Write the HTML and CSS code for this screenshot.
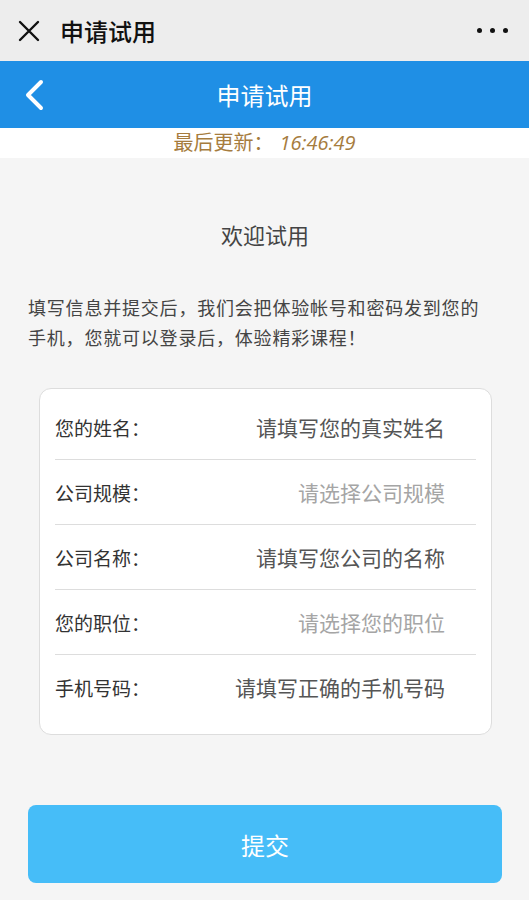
FILE: index.html
```html
<!DOCTYPE html>
<html lang="zh-CN">
<head>
    <meta charset="UTF-8">
    <meta name="viewport" content="width=device-width, initial-scale=1.0">
    <title>申请试用</title>
    <link rel="stylesheet" href="styles.css">
</head>
<body>
    <!-- 微信顶部栏 -->
    <div class="wx-bar">
        <svg class="wx-close" width="24" height="24" viewBox="0 0 24 24">
            <path d="M3 3 L21 21 M21 3 L3 21" stroke="#111" stroke-width="2.4" fill="none" stroke-linecap="round"/>
        </svg>
        <span class="wx-title">申请试用</span>
        <span class="wx-more"><i></i><i></i><i></i></span>
    </div>

    <!-- 页面标题 -->
    <header class="header">
        <a class="back" href="#">
            <svg width="24" height="32" viewBox="0 0 24 32">
                <path d="M18 3 L5 16 L18 29" stroke="#fff" stroke-width="4" fill="none" stroke-linecap="round" stroke-linejoin="round"/>
            </svg>
        </a>
        <h1>申请试用</h1>
    </header>

    <div class="update">最后更新：<em>16:46:49</em></div>

    <main class="content">
        <h2>欢迎试用</h2>
        <p class="intro">填写信息并提交后，我们会把体验帐号和密码发到您的<br>手机，您就可以登录后，体验精彩课程！</p>

        <form class="card" id="trialForm">
            <div class="row">
                <label>您的姓名：</label>
                <span class="value">请填写您的真实姓名</span>
            </div>
            <div class="row">
                <label>公司规模：</label>
                <span class="value select">请选择公司规模</span>
            </div>
            <div class="row">
                <label>公司名称：</label>
                <span class="value">请填写您公司的名称</span>
            </div>
            <div class="row">
                <label>您的职位：</label>
                <span class="value select">请选择您的职位</span>
            </div>
            <div class="row">
                <label>手机号码：</label>
                <span class="value">请填写正确的手机号码</span>
            </div>
        </form>

        <button class="submit" type="submit" form="trialForm">提交</button>
    </main>
</body>
</html>
```

FILE: styles.css
```css
:root {
    --blue: #1f8fe5;
    --btn-blue: #46bdf8;
    --bg: #f5f5f5;
    --text: #444;
}

body {
    margin: 0;
    font-family: "Noto Sans CJK SC", "Noto Sans", sans-serif;
    background: var(--bg);
    color: var(--text);
}

/* 微信顶部栏 */
.wx-bar {
    height: 61px;
    background: #ededed;
    display: flex;
    align-items: center;
    padding: 0 21px 0 17px;
    box-sizing: border-box;
}

.wx-close {
    margin-right: 19px;
}

.wx-title {
    font-size: 24px;
    font-weight: 500;
    color: #111;
    flex: 1;
}

.wx-more {
    display: flex;
    gap: 8px;
}

.wx-more i {
    width: 5px;
    height: 5px;
    border-radius: 50%;
    background: #111;
}

/* 蓝色标题 */
.header {
    height: 67px;
    background: var(--blue);
    display: flex;
    align-items: center;
    justify-content: center;
    position: relative;
}

.header h1 {
    margin: 0;
    font-size: 24px;
    font-weight: 400;
    color: #fff;
}

.back {
    position: absolute;
    left: 23px;
    top: 18px;
    line-height: 0;
}

.update {
    height: 30px;
    line-height: 28px;
    background: #fff;
    text-align: center;
    font-size: 20px;
    color: #a67c3e;
}

.update em {
    font-family: "Open Sans", "Noto Sans", sans-serif;
    font-style: italic;
    font-size: 20px;
    margin-left: 6px;
}

.content {
    padding: 0 27px 0 28px;
}

.content h2 {
    margin: 0;
    padding-top: 59px;
    text-align: center;
    font-size: 22px;
    font-weight: 400;
    color: #444;
    line-height: 34px;
}

.intro {
    margin: 41px 0 0;
    font-size: 18px;
    letter-spacing: 0.8px;
    line-height: 30px;
    color: #444;
}

/* 表单卡片 */
.card {
    margin: 36px 10px 0 11px;
    background: #fff;
    border: 1px solid #ddd;
    border-radius: 12px;
    padding: 6px 15px 15px 15px;
}

.row {
    height: 64px;
    display: flex;
    align-items: center;
    justify-content: space-between;
    border-bottom: 1px solid #ddd;
}

.row:last-child {
    border-bottom: none;
}

.row label {
    font-size: 19px;
    color: #333;
}

.value {
    font-size: 21px;
    color: #555;
    margin-right: 31px;
}

.value.select {
    color: #a5a5a5;
}

.submit {
    display: block;
    width: 100%;
    height: 78px;
    margin-top: 70px;
    border: none;
    border-radius: 8px;
    background: var(--btn-blue);
    color: #fff;
    font-family: inherit;
    font-size: 24px;
    cursor: pointer;
}
```
